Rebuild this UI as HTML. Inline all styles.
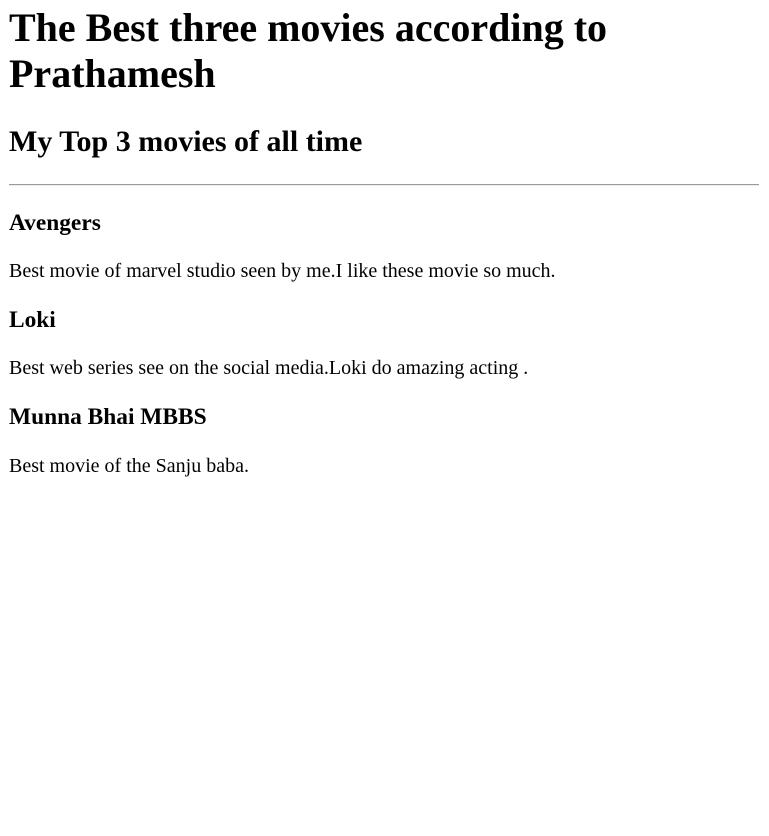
<!DOCTYPE html>
<html><head><meta charset="utf-8"><style>
html,body{margin:0;padding:0;background:#fff;}
body{padding:0 10px 0 9px;font-family:"Liberation Serif","Times New Roman",serif;color:#000;}
h1{font-size:40px;margin:5px 0 26.8px;font-weight:bold;line-height:46px;}
h2{font-size:30px;margin:0 0 25.2px;line-height:35px;}
hr{margin:0;border:0;border-top:1px solid #9a9a9a;border-bottom:1px solid #eee;height:0;}
h3{font-size:23.4px;margin:23.6px 0;line-height:27px;}
p{font-size:20px;margin:20.2px 0;line-height:23px;}
</style></head><body>
<h1>The Best three movies according to Prathamesh</h1>
<h2>My Top 3 movies of all time</h2>
<hr>
<h3>Avengers</h3>
<p>Best movie of marvel studio seen by me.I like these movie so much.</p>
<h3>Loki</h3>
<p>Best web series see on the social media.Loki do amazing acting .</p>
<h3>Munna Bhai MBBS</h3>
<p>Best movie of the Sanju baba.</p>
</body></html>
